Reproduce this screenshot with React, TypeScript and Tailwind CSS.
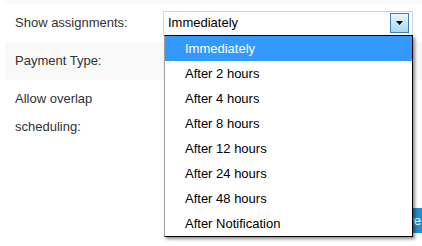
const OPTIONS = [
  'Immediately',
  'After 2 hours',
  'After 4 hours',
  'After 8 hours',
  'After 12 hours',
  'After 24 hours',
  'After 48 hours',
  'After Notification',
]

export default function App() {
  return (
    <div className="relative h-[246px] w-full overflow-hidden bg-white font-['Liberation_Sans',Arial,sans-serif] text-[13px] text-[#333]">
      <div className="ml-[5px]">
        <div className="h-[4px] bg-[#f9f9f9]" />

        {/* Show assignments */}
        <div className="flex h-[38px] items-center">
          <div className="w-[158px] pl-[10px]">Show assignments:</div>
          <div className="flex h-[25px] w-[250px] items-center justify-between border border-[#d4d4d4] pl-[4px] pr-[3px] text-black">
            <span>Immediately</span>
            <span className="flex h-[20px] w-[19px] items-center justify-center border border-[#3c7fb1] bg-gradient-to-b from-[#eaf6fd] to-[#a7d9f5]">
              <svg width="7" height="4" viewBox="0 0 7 4">
                <path d="M0 0h7L3.5 4z" fill="#000" />
              </svg>
            </span>
          </div>
        </div>

        {/* Payment type */}
        <div className="flex h-[38px] items-center bg-[#f9f9f9]">
          <div className="w-[158px] pl-[10px]">Payment Type:</div>
        </div>

        {/* Allow overlap */}
        <div className="flex pt-[5px]">
          <div className="w-[158px] pl-[10px] leading-[28px]">
            Allow overlap
            <br />
            scheduling:
          </div>
        </div>

        <div className="mt-[67px] flex justify-end">
          <button className="-mr-[14px] h-[25px] bg-[#1f8dd6] px-[15px] text-white">Save</button>
        </div>
      </div>

      {/* Open dropdown list */}
      <ul className="absolute left-[164px] top-[35px] w-[249px] border border-black border-l-[#a0a0a0] bg-white text-black shadow-[2px_2px_3px_rgba(0,0,0,0.45)]">
        {OPTIONS.map((opt, i) => (
          <li
            key={opt}
            className={
              i === 0
                ? 'flex h-[25px] items-center bg-[#3399ff] pl-[20px] text-white'
                : 'flex h-[25px] items-center pl-[20px]'
            }
          >
            {opt}
          </li>
        ))}
      </ul>
    </div>
  )
}
